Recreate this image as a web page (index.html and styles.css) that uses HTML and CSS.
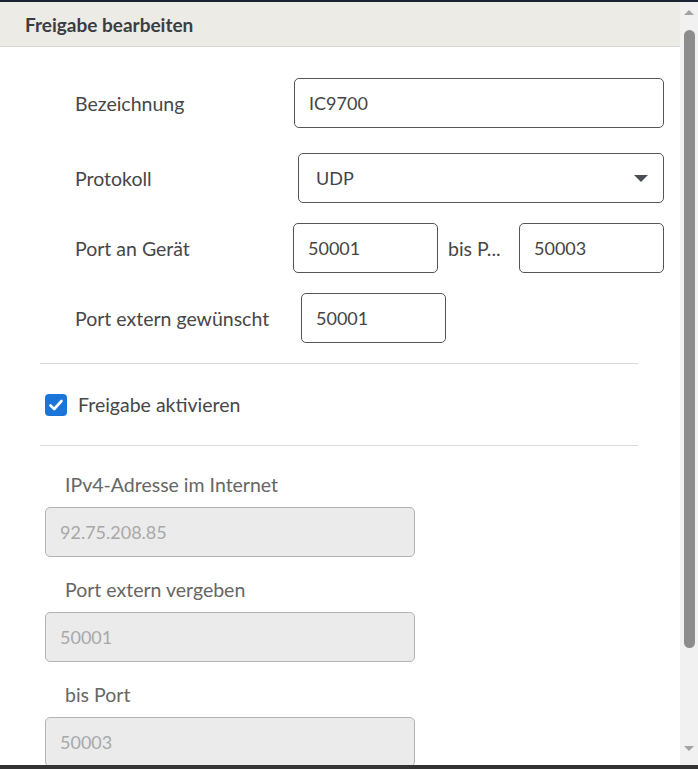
FILE: index.html
```html
<!DOCTYPE html>
<html lang="de">
<head>
<meta charset="utf-8">
<link rel="stylesheet" href="styles.css">
</head>
<body>
<div class="topline"></div>
<div class="frame">
  <div class="panel">
    <div class="header">Freigabe bearbeiten</div>
    <div class="body">
      <div class="row first">
        <div class="label w1">Bezeichnung</div>
        <div class="field wide">IC9700</div>
      </div>
      <div class="row">
        <div class="label w2">Protokoll</div>
        <div class="field select">UDP<span class="caret"></span></div>
      </div>
      <div class="row">
        <div class="label w3">Port an Gerät</div>
        <div class="field small">50001</div>
        <div class="mid">bis P...</div>
        <div class="field small">50003</div>
      </div>
      <div class="row">
        <div class="label w4">Port extern gewünscht</div>
        <div class="field small">50001</div>
      </div>
      <div class="sep"></div>
      <div class="check">
        <span class="box"><svg width="16" height="16" viewBox="0 0 16 16"><path d="M2.5 8.5 L6.2 12 L13.5 4" fill="none" stroke="#fff" stroke-width="2.6" stroke-linecap="round" stroke-linejoin="round"/></svg></span>
        <span>Freigabe aktivieren</span>
      </div>
      <div class="sep"></div>
      <div class="stack">
        <div class="slabel">IPv4-Adresse im Internet</div>
        <div class="field disabled">92.75.208.85</div>
        <div class="slabel">Port extern vergeben</div>
        <div class="field disabled">50001</div>
        <div class="slabel">bis Port</div>
        <div class="field disabled">50003</div>
      </div>
    </div>
  </div>
  <div class="scrollbar">
    <span class="arr up"></span>
    <div class="thumb"></div>
    <span class="arr down"></span>
  </div>
</div>
<div class="bottombar"></div>
</body>
</html>
```
FILE: styles.css
```css
html, body {
  margin: 0;
  padding: 0;
  width: 698px;
  height: 769px;
  overflow: hidden;
  background: #fff;
  font-family: "Lato", "Open Sans", sans-serif;
  color: #444;
}
.topline {
  height: 2px;
  background: #1c2433;
}
.frame {
  display: flex;
  height: 763px;
  overflow: hidden;
}
.panel {
  width: 680px;
  overflow: hidden;
}
.header {
  height: 44px;
  background: #ecebe6;
  border-bottom: 1px solid #d6d6d2;
  padding-left: 25px;
  font-size: 19px;
  font-weight: 700;
  color: #3a3d42;
  line-height: 46px;
}
.body {
  padding: 31px 0 0 0;
}
.row {
  display: flex;
  align-items: center;
  margin-bottom: 20px;
  padding-left: 75px;
}
.row.first { margin-bottom: 25px; }
.label {
  font-size: 19.5px;
  color: #474747;
}
.w1 { width: 219px; }
.w2 { width: 223px; }
.w3 { width: 218px; }
.w4 { width: 226px; }
.field {
  box-sizing: border-box;
  height: 50px;
  border: 1px solid #555;
  border-radius: 5px;
  font-size: 18px;
  line-height: 48px;
  padding-left: 14px;
  color: #444;
  position: relative;
}
.wide { width: 370px; }
.select { width: 366px; padding-left: 17px; }
.small { width: 145px; }
.caret {
  position: absolute;
  right: 15px;
  top: 21px;
  width: 0;
  height: 0;
  border-left: 7px solid transparent;
  border-right: 7px solid transparent;
  border-top: 7px solid #4a4f57;
}
.mid {
  width: 81px;
  font-size: 19.5px;
  padding-left: 10px;
  box-sizing: border-box;
  white-space: nowrap;
  color: #474747;
}
.sep {
  margin: 0 0 0 40px;
  width: 598px;
  height: 1px;
  background: #d9d9d9;
}
.check {
  display: flex;
  align-items: center;
  height: 81px;
  padding-left: 45px;
  font-size: 19.5px;
  color: #474747;
}
.box {
  width: 22px;
  height: 22px;
  border-radius: 4px;
  background: #1b74d8;
  display: flex;
  align-items: center;
  justify-content: center;
  margin-right: 11px;
}
.stack {
  padding-left: 45px;
  padding-top: 28px;
}
.slabel {
  font-size: 19.5px;
  color: #666;
  padding-left: 20px;
  height: 22px;
  line-height: 22px;
  margin-bottom: 11px;
}
.disabled {
  width: 370px;
  background: #ebebeb;
  border-color: #b3b3b3;
  color: #a8a8a8;
  margin-bottom: 22px;
}
.scrollbar {
  width: 18px;
  background: #f1f1f1;
  display: flex;
  flex-direction: column;
  align-items: center;
  position: relative;
}
.thumb {
  width: 11px;
  height: 618px;
  background: #8c8c8c;
  border-radius: 6px;
  margin-top: 28px;
}
.arr {
  position: absolute;
  left: 4px;
  width: 0;
  height: 0;
  border-left: 5px solid transparent;
  border-right: 5px solid transparent;
}
.up { top: 8px; border-bottom: 5px solid #a3a3a3; }
.down { top: 744px; border-top: 5px solid #a3a3a3; }
.bottombar {
  height: 4px;
  background: #333;
}
```
